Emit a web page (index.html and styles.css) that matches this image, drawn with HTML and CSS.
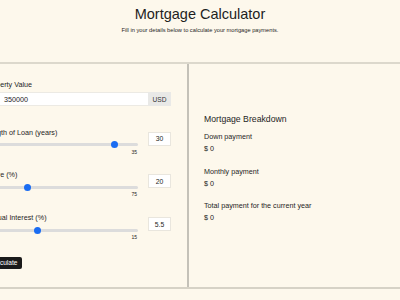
FILE: index.html
```html
<!DOCTYPE html>
<html lang="en">
<head>
<meta charset="utf-8">
<title>Mortgage Calculator</title>
<link rel="stylesheet" href="styles.css">
</head>
<body>
<header class="header">
  <h1 class="title">Mortgage Calculator</h1>
  <p class="subtitle">Fill in your details below to calculate your mortgage payments.</p>
</header>
<main class="main">
  <section class="form-panel">
    <div class="field">
      <label class="label">Property Value</label>
      <div class="input-group">
        <span class="addon addon-left">$</span>
        <span class="text-input">350000</span>
        <span class="addon addon-right">USD</span>
      </div>
    </div>

    <div class="slider-row first">
      <div class="slider-col">
        <label class="label">Length of Loan (years)</label>
        <div class="track"><span class="thumb" style="left: 84.6%"></span></div>
        <div class="max">35</div>
      </div>
      <span class="num-box">30</span>
    </div>

    <div class="slider-row">
      <div class="slider-col">
        <label class="label">Share (%)</label>
        <div class="track"><span class="thumb" style="left: 28%"></span></div>
        <div class="max">75</div>
      </div>
      <span class="num-box">20</span>
    </div>

    <div class="slider-row">
      <div class="slider-col">
        <label class="label">Annual Interest (%)</label>
        <div class="track"><span class="thumb" style="left: 34%"></span></div>
        <div class="max">15</div>
      </div>
      <span class="num-box">5.5</span>
    </div>

    <button class="calc-btn">Calculate</button>
  </section>

  <section class="result-panel">
    <h2 class="result-title">Mortgage Breakdown</h2>
    <div class="result-item first">
      <div class="result-label">Down payment</div>
      <div class="result-value">$ 0</div>
    </div>
    <div class="result-item">
      <div class="result-label">Monthly payment</div>
      <div class="result-value">$ 0</div>
    </div>
    <div class="result-item">
      <div class="result-label">Total payment for the current year</div>
      <div class="result-value">$ 0</div>
    </div>
  </section>
</main>
</body>
</html>
```

FILE: styles.css
```css
* { box-sizing: border-box; }

html, body {
  margin: 0;
  padding: 0;
}

body {
  background: #fdf8ec;
  color: #1e1e1e;
  font-family: "Liberation Sans", Arial, Helvetica, sans-serif;
  width: 400px;
  height: 300px;
  overflow: hidden;
}

.header {
  text-align: center;
  padding-top: 5px;
}

.title {
  margin: 0;
  font-size: 14.5px;
  font-weight: normal;
  line-height: 18px;
}

.subtitle {
  margin: 2.5px 0 0;
  font-size: 5.7px;
  line-height: 8px;
}

.main {
  display: grid;
  grid-template-columns: 209px 1fr;
  margin-top: 28.5px;
  margin-left: -20px;
  width: 420px;
  height: 227px;
  border-top: 2px solid #dcd8cc;
  border-bottom: 2px solid #d6d2c6;
}

.form-panel {
  border-right: 2px solid #c4c1b8;
  padding: 16px 16px 0 5px;
}

.label {
  display: block;
  font-size: 7.2px;
  line-height: 9px;
  white-space: nowrap;
}

.input-group {
  display: flex;
  height: 14px;
  margin-top: 3px;
}

.addon {
  display: flex;
  align-items: center;
  justify-content: center;
  background: #e9e9e7;
  font-size: 6.6px;
  color: #333;
}

.addon-left { width: 15px; }
.addon-right { width: 23px; }

.text-input {
  flex: 1;
  display: flex;
  align-items: center;
  background: #fff;
  padding-left: 4px;
  font-size: 7.2px;
  border-top: 1px solid #eceae4;
  border-bottom: 1px solid #eceae4;
}

.slider-row {
  display: flex;
  align-items: flex-start;
  gap: 10px;
  margin-top: 15.7px;
}

.slider-row.first { margin-top: 21.7px; }

.slider-col {
  flex: 1;
}

.track {
  position: relative;
  height: 3px;
  margin-top: 6.5px;
  background: #dcdcdc;
  border-radius: 2px;
}

.thumb {
  position: absolute;
  top: -2px;
  width: 7px;
  height: 7px;
  margin-left: -3.5px;
  border-radius: 50%;
  background: #1a6cf2;
}

.max {
  text-align: right;
  font-size: 5px;
  line-height: 6px;
  margin-top: 2.5px;
  padding-right: 1px;
}

.num-box {
  display: flex;
  align-items: center;
  justify-content: center;
  width: 23px;
  height: 14px;
  margin-top: 4px;
  background: #fff;
  border: 1px solid #e9e6de;
  font-size: 6.8px;
}

.calc-btn {
  display: block;
  margin-top: 16.7px;
  height: 12.7px;
  padding: 0 4px 0 5px;
  border: none;
  border-radius: 2px;
  background: #1a1a1a;
  color: #fff;
  font-family: inherit;
  font-size: 6.6px;
  line-height: 12.7px;
}

.result-panel {
  padding: 49.8px 0 0 15px;
}

.result-title {
  margin: 0;
  font-size: 8.7px;
  font-weight: normal;
  line-height: 11px;
}

.result-item {
  margin-top: 13.3px;
}

.result-item.first { margin-top: 7.5px; }

.result-label {
  font-size: 7.2px;
  line-height: 9px;
}

.result-value {
  margin-top: 3px;
  font-size: 7.2px;
  line-height: 9px;
}
```
